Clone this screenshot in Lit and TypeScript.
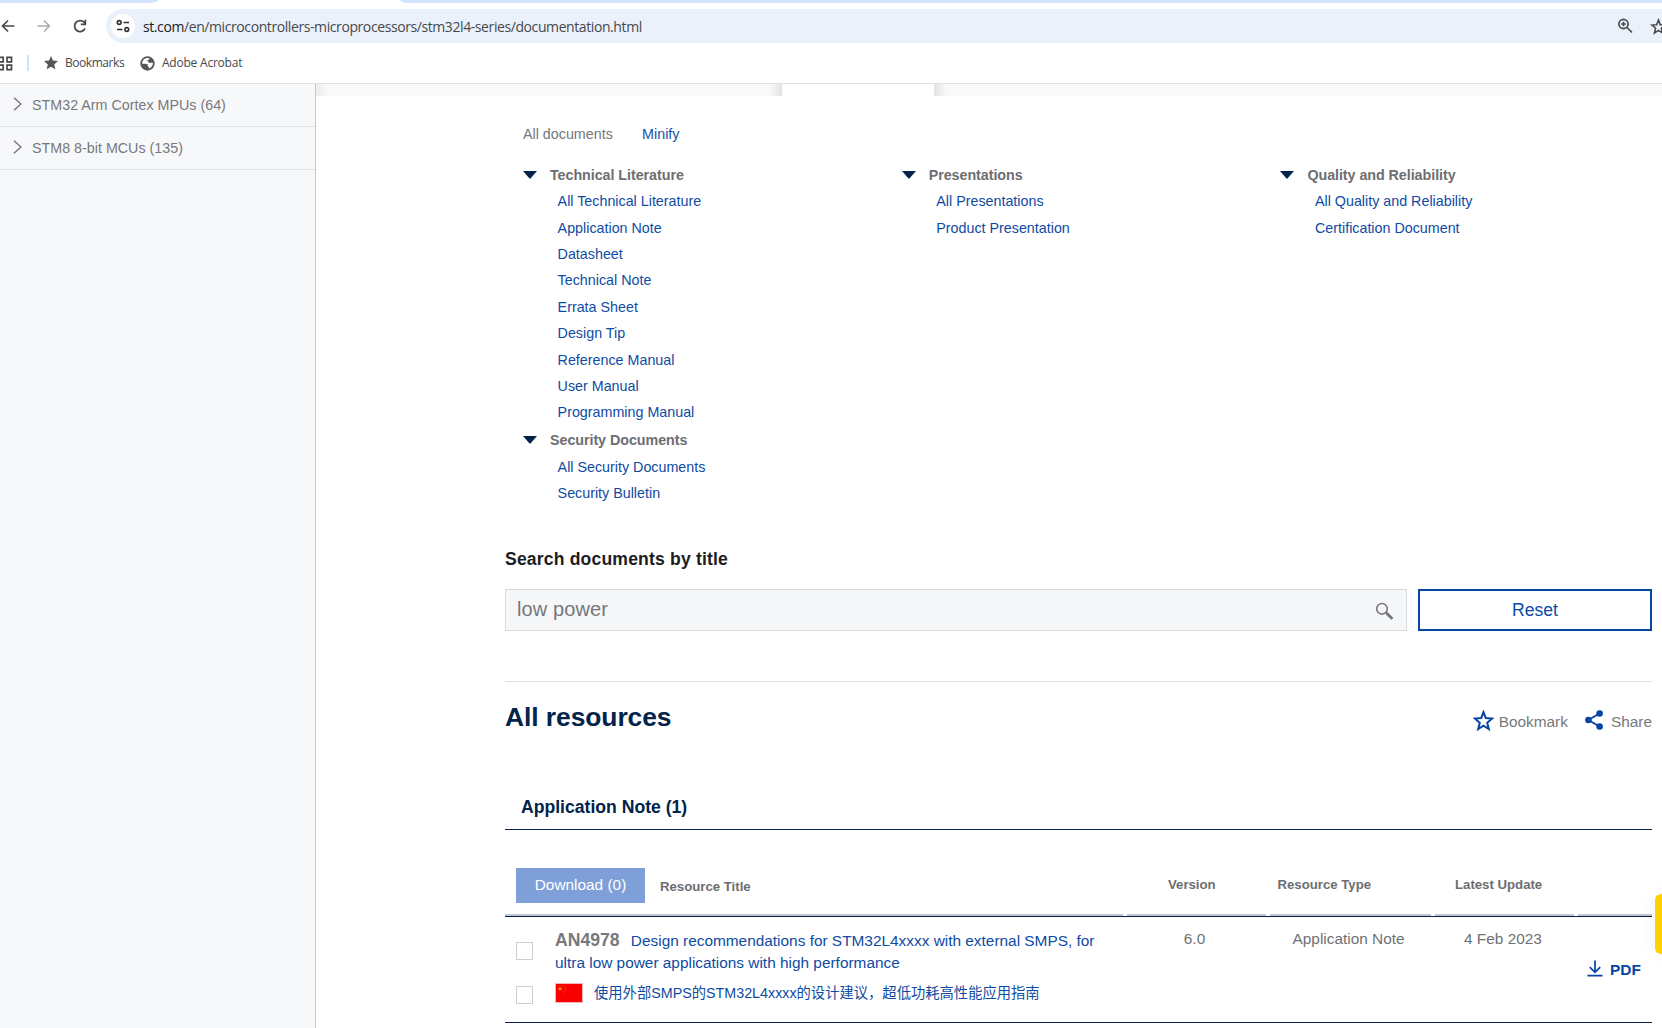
import { LitElement, html, css, svg } from "lit";
import { customElement } from "lit/decorators.js";

interface Group { title: string; items: string[] }

const COLUMNS: Group[][] = [
  [
    {
      title: "Technical Literature",
      items: ["All Technical Literature", "Application Note", "Datasheet", "Technical Note", "Errata Sheet", "Design Tip", "Reference Manual", "User Manual", "Programming Manual"],
    },
    { title: "Security Documents", items: ["All Security Documents", "Security Bulletin"] },
  ],
  [{ title: "Presentations", items: ["All Presentations", "Product Presentation"] }],
  [{ title: "Quality and Reliability", items: ["All Quality and Reliability", "Certification Document"] }],
];

const STAR = svg`<path d="M12 3.600l2.300 6 6.300.5-4.900 4.200 1.600 6.200L12 17.100l-5.300 3.400 1.600-6.200L3.400 10.100l6.300-.5z" fill="none" stroke="currentColor" stroke-width="2" stroke-linejoin="miter"/>`;

@customElement("browser-bar")
class BrowserBar extends LitElement {
  static styles = css`
    :host { display: block; height: 83px; background: #fff; border-bottom: 1px solid #dcdfe1; font-family: "Open Sans", sans-serif; color: #47494c; overflow: hidden; }
    svg { display: block; flex: none; }
    .tabs { display: flex; height: 3px; }
    .tab-left { width: 158px; background: #d3e3fd; border-bottom-right-radius: 8px 3px; }
    .tab-active { width: 242px; }
    .tab-right { flex: 1; background: #d3e3fd; border-bottom-left-radius: 8px 3px; }
    .tools { display: flex; align-items: center; height: 34px; margin-top: 6px; }
    .back { margin-left: 1px; }
    .fwd { margin-left: 22px; color: #a9abad; }
    .reload { margin-left: 20px; }
    .omni { flex: 1; height: 34px; margin-left: 17px; background: #ebf1fa; border-radius: 17px 0 0 17px; display: flex; align-items: center; }
    .site { width: 24px; height: 24px; border-radius: 50%; background: #fff; margin-left: 5px; display: flex; align-items: center; justify-content: center; color: #303236; }
    .url { margin-left: 8px; font-size: 14px; line-height: 34px; letter-spacing: -0.41px; flex: 1; white-space: nowrap; padding-top: 1px; }
    .url b { font-weight: 400; color: #1f2023; }
    .zoom { margin-right: 17px; }
    .fav { margin-right: -5px; color: #47494c; }
    .marks { display: flex; align-items: center; height: 40px; font-size: 12px; }
    .marks span { margin-top: -2px; }
    .sep { width: 2px; height: 16px; background: #d3e3fd; margin: 0 15px 0 14px; }
    .t1 { margin-left: 7px; width: 59px; letter-spacing: -0.45px; }
    .globe { margin-left: 16px; }
    .t2 { margin-left: 7px; letter-spacing: -0.22px; }
  `;
  render() {
    return html`
      <div class="tabs"><div class="tab-left"></div><div class="tab-active"></div><div class="tab-right"></div></div>
      <div class="tools">
        <svg class="back" width="14" height="14" viewBox="0 0 14 14" fill="none" stroke="#47494c" stroke-width="1.700"><path d="M13.500 7H1.800M7 1.500L1.500 7 7 12.500"/></svg>
        <svg class="fwd" width="14" height="14" viewBox="0 0 14 14" fill="none" stroke="currentColor" stroke-width="1.500"><path d="M.5 7h11.700M7 1.500L12.500 7 7 12.500"/></svg>
        <svg class="reload" width="18" height="18" viewBox="0 0 18 18" fill="none" stroke="#47494c" stroke-width="1.800"><path d="M14 11.500A5.500 5.500 0 1 1 13 5.200L14.300 6.600"/><path d="M14.300 2.800v4.500H9.800"/></svg>
        <div class="omni">
          <div class="site"><svg width="14" height="14" viewBox="0 0 14 14" fill="none" stroke="currentColor" stroke-width="1.600"><circle cx="3.200" cy="3.500" r="1.900"/><path d="M7.500 3.500H13M1 10.500h5.500"/><circle cx="10.800" cy="10.500" r="1.900"/></svg></div>
          <div class="url"><b>st.com</b>/en/microcontrollers-microprocessors/stm32l4-series/documentation.html</div>
          <svg class="zoom" width="16" height="16" viewBox="0 0 16 16" fill="none" stroke="#47494c" stroke-width="1.700"><circle cx="6.500" cy="6" r="4.600"/><path d="M10 9.500l5 5M4.200 6h4.600M6.500 3.700v4.600"/></svg>
          <svg class="fav" width="17" height="17" viewBox="1 1 22 22">${STAR}</svg>
        </div>
      </div>
      <div class="marks">
        <svg width="13" height="15" viewBox="0 0 13 15" fill="none" stroke="#47494c" stroke-width="1.700"><path d="M-2 1.400h5.200v4.400H-2zM7 1.400h4.500v4.400H7zM-2 9.200h5.200v4.400H-2zM7 9.200h4.500v4.400H7z"/></svg>
        <div class="sep"></div>
        <svg width="14" height="14" viewBox="2 2 20 20" fill="#54575a"><path d="M12 17.300L18.200 21l-1.600-7L22 9.200l-7.200-.6L12 2 9.200 8.600 2 9.200l5.500 4.800L5.800 21z"/></svg>
        <span class="t1">Bookmarks</span>
        <svg class="globe" width="15" height="15" viewBox="0 0 15 15"><circle cx="7.500" cy="7.500" r="7.200" fill="#54575a"/><path d="M6.500 2C8 2.200 9 2 9.600 2.300 9.500 4 7.500 3.700 7.200 5.200c1 .6 1.800.5 1.900 1.600.8.300 2.700-.4 3.900.2-.2 2.800-1.600 4.500-3.700 5.500-.3-1-.3-1.800-1.400-2.100L7.600 8.300C6 8 3.500 7.900 2 7.500 2.200 4.500 4.200 2.500 6.500 2z" fill="#fff"/></svg>
        <span class="t2">Adobe Acrobat</span>
      </div>`;
  }
}

@customElement("doc-filter")
class DocFilter extends LitElement {
  static styles = css`
    :host { display: block; padding: 0 0 0 18px; }
    .top { display: flex; gap: 29.300px; line-height: 26px; color: #75777a; }
    .top a { color: #1550a8; }
    .cols { display: grid; grid-template-columns: 378.700px 378.700px 1fr; margin-top: 15px; line-height: 26.400px; }
    .head { display: flex; align-items: center; font-weight: 700; color: #6c6e72; height: 26.200px; letter-spacing: -0.05px; }
    .group + .group .head { height: 28.200px; }
    .group + .group { line-height: 26.200px; }
    .tri { width: 14px; height: 8px; margin-right: 13px; display: block; }
    .item { display: block; padding-left: 34.600px; color: #0f4ba3; }
  `;
  render() {
    return html`
      <div class="top"><span>All documents</span><a>Minify</a></div>
      <div class="cols">
        ${COLUMNS.map(col => html`<div>${col.map(g => html`
          <div class="group">
            <div class="head"><svg class="tri" viewBox="0 0 14 8"><path d="M0 0h14L7.700 7.300q-.7.700-1.400 0z" fill="#03234b"/></svg>${g.title}</div>
            ${g.items.map(i => html`<a class="item">${i}</a>`)}
          </div>`)}</div>`)}
      </div>`;
  }
}

@customElement("resource-table")
class ResourceTable extends LitElement {
  static styles = css`
    :host { display: block; }
    .row { display: grid; grid-template-columns: 618px 139px 161px 139px 74px; column-gap: 4px; }
    .header { font-size: 13.200px; font-weight: 700; color: #6c6e72; height: 86px; border-bottom: 1px solid #03234b; }
    .header > div { border-bottom: 2px solid #c5c8cb; display: flex; align-items: center; padding-top: 26px; box-sizing: border-box; height: 86px; }
    .header .first { padding-top: 27px; }
    .header .num { padding-top: 25px; }
    .btn { width: 129px; height: 35px; margin-left: 11px; margin-right: 15px; margin-top: -1px; background: #7e9fd8; color: #fff; font-weight: 400; font-size: 15.400px; display: flex; align-items: center; justify-content: center; padding-bottom: 1px; box-sizing: border-box; }
    .rt { padding-top: 2px; }
    .body { height: 105px; border-bottom: 1px solid #03234b; font-size: 15.400px; color: #6f7175; }
    .title { display: grid; grid-template-columns: 39px 1fr; margin-left: 11px; align-content: start; padding-top: 13px; }
    .box { width: 17px; height: 18px; box-sizing: border-box; border: 1px solid #cccfd1; background: #fff; }
    .box.a { margin-top: 12px; }
    .box.b { margin-top: 9px; }
    .name { line-height: 22px; color: #0f4ba3; height: 47px; }
    .name b { font-size: 17.600px; line-height: 20px; color: #77797c; margin-right: 7px; }
    .cn { display: flex; align-items: center; font-size: 14.300px; line-height: 22px; color: #0f4ba3; height: 28px; font-family: "Liberation Sans", "Noto Sans CJK SC", sans-serif; padding-top: 4px; box-sizing: border-box; }
    .flag { display: block; margin-right: 11px; margin-top: -1px; }
    .cell { padding-top: 13px; line-height: 18px; }
    .pdf { display: flex; align-items: flex-start; padding: 43px 0 0 9px; font-weight: 700; color: #0645a5; line-height: 19px; }
    .pdf svg { margin-right: 7px; display: block; }
    .ver { text-align: center; padding-right: 4px; }
    .kind { padding-left: 22.500px; }
    .date { padding-left: 29px; }
    .rtype { padding-left: 7.500px; }
    .latest { padding-left: 20px; }
    .verh { padding-left: 41px; }
  `;
  render() {
    return html`
      <div class="row header">
        <div class="first"><div class="btn">Download (0)</div><span class="rt">Resource Title</span></div>
        <div class="num"><span class="verh">Version</span></div>
        <div class="num"><span class="rtype">Resource Type</span></div>
        <div class="num"><span class="latest">Latest Update</span></div>
        <div></div>
      </div>
      <div class="row body">
        <div class="title">
          <div class="box a"></div>
          <div class="name"><b>AN4978</b> Design recommendations for STM32L4xxxx with external SMPS, for<br>ultra low power applications with high performance</div>
          <div class="box b"></div>
          <div class="cn"><svg class="flag" width="28" height="20" viewBox="0 0 28 20"><rect width="28" height="20" fill="#f7b5b5"/><rect x="1" y="1" width="26" height="18" fill="#f90000"/><path d="M5 3.200l.7 1.700h1.800L6.100 6l.5 1.800L5 6.800 3.400 7.800 3.900 6 2.500 4.900h1.800z" fill="#ff9a00"/><path d="M8.500 2.500h1v1h-1zM10 4.500h1v1h-1zM10 6.700h1v1h-1zM8.500 8.500h1v1h-1z" fill="#f76a00"/></svg><span>使用外部SMPS的STM32L4xxxx的设计建议，超低功耗高性能应用指南</span></div>
        </div>
        <div class="cell ver">6.0</div>
        <div class="cell kind">Application Note</div>
        <div class="cell date">4 Feb 2023</div>
        <div class="pdf"><svg width="16" height="17" viewBox="0 0 16 17" fill="none" stroke="#0645a5" stroke-width="1.700"><path d="M8 .5v12M2.800 7.200L8 12.400l5.200-5.200M.5 15.700h15"/></svg>PDF</div>
      </div>`;
  }
}

@customElement("app-root")
class AppRoot extends LitElement {
  static styles = css`
    :host { display: block; position: relative; width: 1662px; height: 1028px; overflow: hidden; background: #fff; font-family: "Liberation Sans", Arial, sans-serif; font-size: 14.300px; }
    .page { display: flex; height: 944px; }
    .side { width: 315px; border-right: 1px solid #c6c8ca; background: #f7f8fa; color: #77797c; }
    .nav { display: flex; align-items: center; height: 42px; border-bottom: 1px solid #dfe2e5; }
    .nav svg { display: block; margin: -3px 10px 0 13px; }
    .main { flex: 1; min-width: 0; display: flex; flex-direction: column; }
    .strip { display: flex; height: 12px; flex: none; }
    .s1 { width: 466px; background: linear-gradient(90deg, #ededed, #f9f9f9 12px, #f9f9f9 454px, #e2e2e2); }
    .s2 { width: 152px; }
    .s3 { flex: 1; background: linear-gradient(90deg, #e2e2e2, #f9f9f9 12px); }
    .content { padding: 25px 10px 0 189px; }
    .filter { height: 427px; display: block; }
    .label { font-size: 17.600px; letter-spacing: 0.16px; font-weight: 700; color: #1d1d1f; line-height: 22px; }
    .search { display: flex; gap: 11px; margin-top: 19px; height: 42px; }
    .field { flex: 1; box-sizing: border-box; border: 1px solid #d7d9db; background: #f6f7f9; display: flex; align-items: center; justify-content: space-between; padding: 0 13px 2px 11px; font-size: 20px; letter-spacing: 0.12px; color: #75777a; }
    .field svg { margin-top: 3px; }
    .reset { width: 234px; box-sizing: border-box; border: 2px solid #0645a0; display: flex; align-items: center; justify-content: center; font-size: 17.600px; color: #0b4aa5; padding-top: 1px; }
    .hr { height: 1px; background: #dfe1e3; margin-top: 50px; }
    .bar { display: flex; align-items: center; height: 70px; color: #77797c; font-size: 15.400px; }
    h1 { margin: 0; font-size: 26.400px; color: #03234b; flex: 1; letter-spacing: -0.06px; }
    .bar svg { display: block; color: #0645a5; margin-top: 6px; }
    .bar span { margin-top: 9px; }
    .mk { margin-right: 5px; }
    .sh { margin: 0 8px 0 17px; }
    h2 { margin: 40px 0 0; padding-left: 16px; font-size: 17.600px; color: #03234b; line-height: 31px; height: 37px; border-bottom: 1px solid #03234b; }
    .yellow { position: absolute; left: 1655px; top: 894px; width: 20px; height: 60px; background: #ffd200; border-radius: 6px; box-shadow: 0 0 20px rgba(0, 0, 0, 0.06); }
  `;
  render() {
    const chev = html`<svg width="9" height="14" viewBox="0 0 9 14" fill="none" stroke="#6c6e72" stroke-width="1.200"><path d="M1 .8L8 7l-7 6.200"/></svg>`;
    return html`
      <browser-bar></browser-bar>
      <div class="page">
        <div class="side">
          <div class="nav">${chev}STM32 Arm Cortex MPUs (64)</div>
          <div class="nav">${chev}STM8 8-bit MCUs (135)</div>
        </div>
        <div class="main">
          <div class="strip"><div class="s1"></div><div class="s2"></div><div class="s3"></div></div>
          <div class="content">
            <doc-filter class="filter"></doc-filter>
            <div class="label">Search documents by title</div>
            <div class="search">
              <div class="field"><span>low power</span><svg width="18" height="18" viewBox="0 0 18 18" fill="none" stroke="#75777a"><circle cx="7" cy="6.800" r="5.300" stroke-width="1.600"/><path d="M10.800 10.500l1.700 1.700" stroke-width="1.600"/><path d="M12 11.500l4.500 4.500" stroke-width="2.900" stroke-linecap="round"/></svg></div>
              <div class="reset">Reset</div>
            </div>
            <div class="hr"></div>
            <div class="bar">
              <h1>All resources</h1>
              <svg class="mk" width="21" height="21" viewBox="1.500 1.500 21 21">${STAR}</svg><span>Bookmark</span>
              <svg class="sh" width="18" height="20" viewBox="0 0 18 20"><path d="M14.500 3.500L3.400 10l11.100 6.500" fill="none" stroke="currentColor" stroke-width="1.900"/><g fill="currentColor"><circle cx="14.600" cy="3.500" r="3.300"/><circle cx="3.400" cy="10" r="3.300"/><circle cx="14.600" cy="16.500" r="3.300"/></g></svg><span>Share</span>
            </div>
            <h2>Application Note (1)</h2>
            <resource-table></resource-table>
          </div>
        </div>
      </div>
      <div class="yellow"></div>`;
  }
}
